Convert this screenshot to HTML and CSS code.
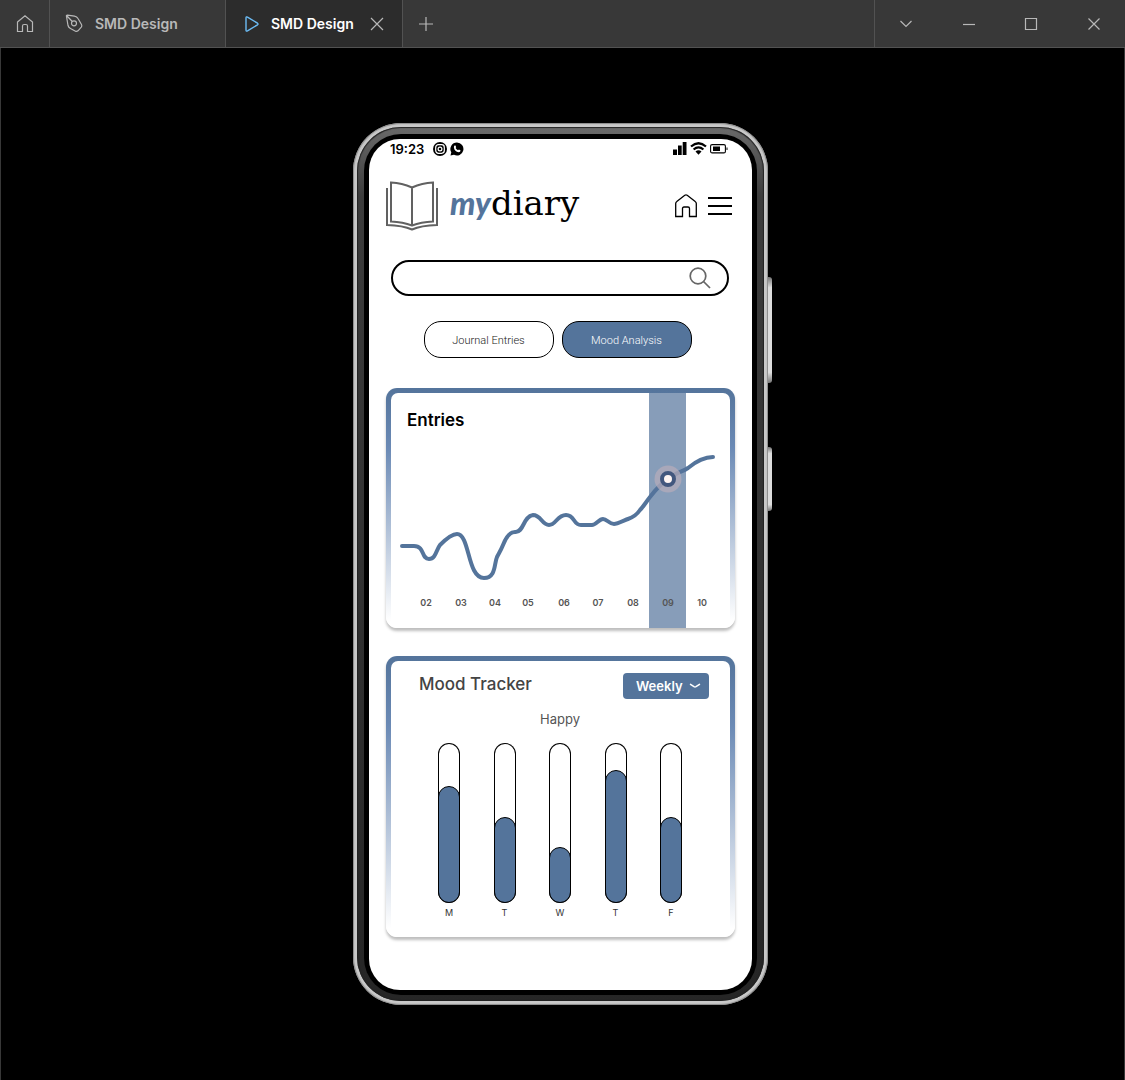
FILE: index.html
```html
<!DOCTYPE html>
<html lang="en">
<head>
<meta charset="utf-8">
<meta name="viewport" content="width=device-width, initial-scale=1">
<title>SMD Design</title>
<link rel="stylesheet" href="styles.css">
</head>
<body>
<header class="titlebar">
  <button class="home-tab" aria-label="Home">
    <svg width="18" height="20" viewBox="0 0 18 20"><path d="M1.5 8 9 1.8 16.500 8V17.500H11.500V12Q11.500 10.500 10 10.500H8Q6.500 10.500 6.500 12V17.500H1.500Z"/></svg>
  </button>
  <button class="tab">
    <svg width="20" height="20" viewBox="0 0 20 20"><path d="M2.500 2.500Q2 1 3.500 1.200L10.500 2.200Q13 2.600 14 4.500L17.500 10.500Q18.300 12 17.300 13.200L14 16.800Q12.800 17.800 11.500 17.200L6.500 14.500Q4.500 13.500 4 11.500ZM2.500 1.500 8.300 7.500"/><circle cx="10" cy="9.300" r="2.500"/></svg>
    <span>SMD Design</span>
  </button>
  <div class="tab tab-active">
    <svg class="play" width="16" height="18" viewBox="0 0 16 18"><path d="M2 3Q2 1.300 3.500 2.100L13.500 8.200Q14.600 9 13.500 9.800L3.500 15.900Q2 16.700 2 15Z"/></svg>
    <span>SMD Design</span>
    <button class="tab-close" aria-label="Close tab">
      <svg width="14" height="14" viewBox="0 0 14 14"><path d="M1 1 13 13M13 1 1 13"/></svg>
    </button>
  </div>
  <button class="new-tab" aria-label="New tab">
    <svg width="16" height="16" viewBox="0 0 16 16"><path d="M1 8H15M8 1V15"/></svg>
  </button>
  <div class="window-controls">
    <button aria-label="More"><svg width="14" height="14" viewBox="0 0 14 14"><path d="M1.500 4 7 9.500 12.500 4"/></svg></button>
    <button aria-label="Minimize"><svg width="14" height="14" viewBox="0 0 14 14"><path d="M1 7.500H13"/></svg></button>
    <button aria-label="Maximize"><svg width="14" height="14" viewBox="0 0 14 14"><path d="M1.500 1.500H12.500V12.500H1.500Z"/></svg></button>
    <button aria-label="Close"><svg width="14" height="14" viewBox="0 0 14 14"><path d="M1.500 1.500 12.500 12.500M12.500 1.500 1.500 12.500"/></svg></button>
  </div>
</header>

<main class="stage">
  <div class="phone">
    <span class="side-button volume"></span>
    <span class="side-button power"></span>
    <div class="bezel">
      <div class="glass">
        <div class="screen">
          <div class="status">
            <span class="time">19:23</span>
            <svg width="14" height="14" viewBox="0 0 14 14"><circle cx="7" cy="7" r="7"/><rect x="2.700" y="2.700" width="8.600" height="8.600" rx="2.700" fill="none" stroke="#fff" stroke-width="1.200"/><circle cx="7" cy="7" r="1.900" fill="none" stroke="#fff" stroke-width="1.200"/></svg>
            <svg width="14" height="14" viewBox="0 0 14 14"><path d="M7 .500A6.500 6.500 0 1 1 4 12.800L.500 13.600 1.300 10.300A6.500 6.500 0 0 1 7 .500Z"/><path d="M4.600 3.500 5.500 3.600 6.200 5.200 5.600 6.100Q6.400 7.600 8 8.300L8.900 7.500 10.500 8.300Q10.600 10.200 8.700 10.300 4.600 9.800 3.900 5.500 3.800 4.200 4.600 3.500Z" fill="#fff"/></svg>
            <span class="spacer"></span>
            <svg width="14" height="14" viewBox="0 0 14 14"><path d="M0 7.500H4V13H0ZM5 3.500H8.700V13H5ZM9.700 0H13.500V13H9.700Z"/></svg>
            <svg width="17" height="14" viewBox="0 0 17 14"><path d="M1 4.500Q8.500-2 16 4.500M3.600 7.500Q8.500 3.300 13.400 7.500" fill="none" stroke="#000" stroke-width="2.300"/><path d="M5.500 9.500Q8.500 7 11.500 9.500L8.500 12.800Z"/></svg>
            <svg width="18" height="14" viewBox="0 0 18 14"><rect x=".600" y="2.600" width="14.800" height="8.300" rx="1.500" fill="none" stroke="#000" stroke-width="1.100"/><path d="M3 4.500H10V9H3ZM16.500 5.500H17.500V8H16.500Z"/></svg>
          </div>

          <header class="app-bar">
            <svg class="book" width="52" height="50" viewBox="0 0 52 50"><path d="M5 1.500Q16 2 26 6.500 36 2 47 1.500V40.500Q35 41 26 44.500 17 41 5 40.500ZM26 6.500V44.500M1 7V44Q17 44.500 26 48.500 35 44.500 51 44V7"/></svg>
            <h1 class="brand"><span class="brand-my">my</span>diary</h1>
            <span class="spacer"></span>
            <a class="home-link" href="#" aria-label="Home"><svg width="22" height="24" viewBox="0 0 22 24"><path d="M.700 9.500Q.700 8.300 1.800 7.500L9.800 1.300Q11 .500 12.200 1.300L20.200 7.500Q21.300 8.300 21.300 9.500V22.500H14.500V14.500Q14.500 13 13 13H9Q7.500 13 7.500 14.500V22.500H.700Z"/></svg></a>
            <button class="menu" aria-label="Menu"><svg width="24" height="20" viewBox="0 0 24 20"><path d="M0 2H24M0 10H24M0 18H24"/></svg></button>
          </header>

          <label class="search">
            <input type="search" aria-label="Search">
            <svg width="22" height="22" viewBox="0 0 22 22"><circle cx="9" cy="9" r="7.800"/><path d="M14.500 14.500 21 21"/></svg>
          </label>

          <nav class="pills">
            <button class="pill">Journal Entries</button>
            <button class="pill pill-active">Mood Analysis</button>
          </nav>

          <section class="card">
            <div class="card-body chart">
              <svg class="plot" viewBox="0 0 339 235" role="img" aria-label="Entries per day">
                <path class="line" d="M11 153H23C34 153 30 166 38 166 45 166 45 157 49 152 53 148 60 141 66 141 79 141 76 185 93 185 105 185 103 171 106 164 108 160 110 157 112 152 115 144 119 139 124 139 133 140 132 123 142 122 150 122 151 132 158 132S166 122 175 122 182 132 190 132H201C205 132 208 126 212 126S218 131 223 131C226 131 234 127 237 126 243 124 247 120 249 117 253 113 255 109 259 104 265 96 270 91 277 86 284 80 291 79 297 75 303 70 312 64 322 64"/>
                <rect class="band" x="258" width="37" height="235"/>
                <circle cx="277" cy="86" r="13.500" fill="#b8adbb" fill-opacity=".7"/>
                <circle cx="277" cy="86" r="6" fill="#fff5f3" stroke="#43577e" stroke-width="4"/>
                <g class="ticks">
                  <text x="35" y="213">02</text><text x="70" y="213">03</text><text x="104" y="213">04</text><text x="137" y="213">05</text><text x="173" y="213">06</text><text x="207" y="213">07</text><text x="242" y="213">08</text><text x="277" y="213">09</text><text x="311" y="213">10</text>
                </g>
              </svg>
              <h2 class="chart-title">Entries</h2>
            </div>
          </section>

          <section class="card">
            <div class="card-body mood">
              <div class="mood-head">
                <h2>Mood Tracker</h2>
                <div class="period">
                  <select aria-label="Period"><option>Weekly</option><option>Monthly</option></select>
                  <svg width="12" height="6" viewBox="0 0 12 6"><path d="M1.500 1.300 5 3.700Q6 4.300 7 3.700L10.500 1.300"/></svg>
                </div>
              </div>
              <p class="mood-name">Happy</p>
              <div class="bars">
                <div class="bar"><div class="track"><div class="fill" style="height:73%"></div></div>M</div>
                <div class="bar"><div class="track"><div class="fill" style="height:54%"></div></div>T</div>
                <div class="bar"><div class="track"><div class="fill" style="height:35%"></div></div>W</div>
                <div class="bar"><div class="track"><div class="fill" style="height:83%"></div></div>T</div>
                <div class="bar"><div class="track"><div class="fill" style="height:54%"></div></div>F</div>
              </div>
            </div>
          </section>
        </div>
      </div>
    </div>
  </div>
</main>
</body>
</html>
```
FILE: styles.css
```css
* { box-sizing: border-box; }

body {
  margin: 0;
  min-height: 100vh;
  display: flex;
  flex-direction: column;
  background: #000;
  font-family: Inter, "Liberation Sans", sans-serif;
}

button, select, input { font: inherit; color: inherit; border: 0; background: none; padding: 0; margin: 0; }
h1, h2, p { margin: 0; }
svg { display: block; flex: none; }
.spacer { flex: 1; }

/* Window title bar */
.titlebar {
  display: flex;
  height: 48px;
  background: #383838;
  border-bottom: 1px solid #525252;
}
.titlebar svg { fill: none; stroke: #b8b8b8; stroke-width: 1.2; }
.titlebar button { display: flex; align-items: center; justify-content: center; }
.titlebar .home-tab { width: 50px; border-right: 1px solid #525252; }
.titlebar .tab {
  display: flex;
  align-items: center;
  justify-content: flex-start;
  gap: 11px;
  width: 176px;
  padding-left: 14px;
  border-right: 1px solid #525252;
  font-size: 14px;
  font-weight: 600;
  color: #b8b8b8;
}
.titlebar .tab-active { width: 177px; padding-left: 18px; background: #2c2c2c; color: #fff; }
.titlebar svg.play { stroke: #6cbcf5; stroke-width: 1.4; }
.tab-close { margin-left: 5px; }
.titlebar .new-tab { width: 46px; }
.window-controls {
  display: flex;
  width: 251px;
  margin-left: auto;
  border-left: 1px solid #525252;
}
.window-controls button { flex: 1; }

/* Device */
.stage {
  flex: 1;
  display: flex;
  justify-content: center;
  align-items: flex-start;
  padding: 75px 4px 75px 0;
  border-left: 1px solid #383838;
  border-right: 1px solid #383838;
}
.phone {
  position: relative;
  width: 100%;
  max-width: 415px;
  padding: 4px;
  border-radius: 48px;
  background: #c8c8c8;
  box-shadow: inset 0 0 1px 1px #8a8a8a;
}
.side-button {
  position: absolute;
  left: 100%;
  width: 4px;
  border-radius: 0 3px 3px 0;
  background: linear-gradient(#777, #ddd 10%, #ddd 90%, #777);
}
.volume { top: 154px; height: 106px; }
.power { top: 324px; height: 64px; }
.bezel {
  padding: 7px 7px 6px;
  border-radius: 44px;
  background: linear-gradient(#6a6a6a, #3c3c3c 8%, #262626);
  box-shadow: inset 0 0 1px 1px #222;
}
.glass { padding: 5px; border-radius: 37px; background: #000; }
.screen {
  display: flex;
  flex-direction: column;
  padding: 1px 17px 53px;
  border-radius: 31px;
  background: #fff;
}

.status { display: flex; align-items: center; gap: 3px; height: 17px; padding: 0 7px 0 4px; }
.time { margin-right: 6px; font-size: 13px; font-weight: 600; line-height: 16px; }

.app-bar { display: flex; align-items: center; height: 50px; margin-top: 24px; padding-right: 3px; }
.book { fill: none; stroke: #616161; stroke-width: 2; }
.brand {
  margin-left: 12px;
  padding-bottom: 6px;
  font: 400 34px/44px "DejaVu Serif", serif;
}
.brand-my { font: italic 900 32px/44px Lato, sans-serif; color: #54749b; }
.home-link { margin-right: 11px; }
.app-bar .home-link svg { fill: none; stroke: #000; stroke-width: 1.3; }
.menu svg { stroke: #000; stroke-width: 2; }

.search {
  display: flex;
  align-items: center;
  height: 36px;
  margin: 29px 6px 0 5px;
  padding: 0 16px;
  border: 2px solid #000;
  border-radius: 18px;
}
.search input { flex: 1; min-width: 0; outline: 0; font-size: 14px; }
.search svg { fill: none; stroke: #666; stroke-width: 1.7; }

.pills { display: flex; justify-content: center; gap: 8px; margin: 25px 6px 30px 0; }
.pills .pill {
  width: 130px;
  height: 37px;
  padding-top: 2px;
  border: 1px solid #000;
  border-radius: 17px;
  font: 300 11px/16px Roboto, sans-serif;
  color: #222;
}
.pills .pill-active { background: #54749b; color: #fff; }

/* Cards: the frame fades from blue to white */
.card {
  padding: 5px 5px 0;
  border-radius: 11px;
  background: linear-gradient(#54749b, #6b8ab5 25%, #fff 97%);
  box-shadow: 0 3px 3px rgba(0, 0, 0, .26);
}
.card + .card { margin-top: 28px; }
.card-body { border-radius: 7px; background: #fff; }

.chart { display: grid; }
.plot, .chart-title { grid-area: 1 / 1; }
.plot { width: 100%; }
.chart-title { padding: 17px 16px; font-size: 17px; font-weight: 600; line-height: 20px; }
.line { fill: none; stroke: #54749b; stroke-width: 4; stroke-linecap: round; stroke-linejoin: round; }
.band { fill: #54749b; fill-opacity: .7; }
.ticks { font-size: 9px; font-weight: 600; fill: #555; text-anchor: middle; }

.mood { padding: 12px 21px 18px 28px; }
.mood-head { display: flex; justify-content: space-between; }
.mood-head h2 { font-size: 17px; font-weight: 500; line-height: 22px; color: #444; }
.period { position: relative; }
.period select {
  appearance: none;
  width: 86px;
  height: 26px;
  padding: 0 13px;
  border-radius: 4px;
  background: #54749b;
  color: #fff;
  font-size: 13px;
  font-weight: 600;
}
.period svg {
  position: absolute;
  right: 8px;
  top: 10px;
  fill: none;
  stroke: #fff;
  stroke-width: 1.5;
  stroke-linecap: round;
  pointer-events: none;
}
.mood-name { margin: 12px 8px 0 0; font-size: 13px; line-height: 16px; text-align: center; color: #555; }
.bars { display: flex; justify-content: space-between; margin: 16px 27px 0 19px; }
.bar { display: flex; flex-direction: column; align-items: center; gap: 4px; font-size: 9px; line-height: 12px; color: #333; }
.track {
  display: flex;
  align-items: flex-end;
  width: 22px;
  height: 160px;
  border-radius: 11px;
  box-shadow: inset 0 0 0 1px #000;
}
.fill { width: 100%; border: 1px solid #000; border-radius: 11px; background: #54749b; }
```
